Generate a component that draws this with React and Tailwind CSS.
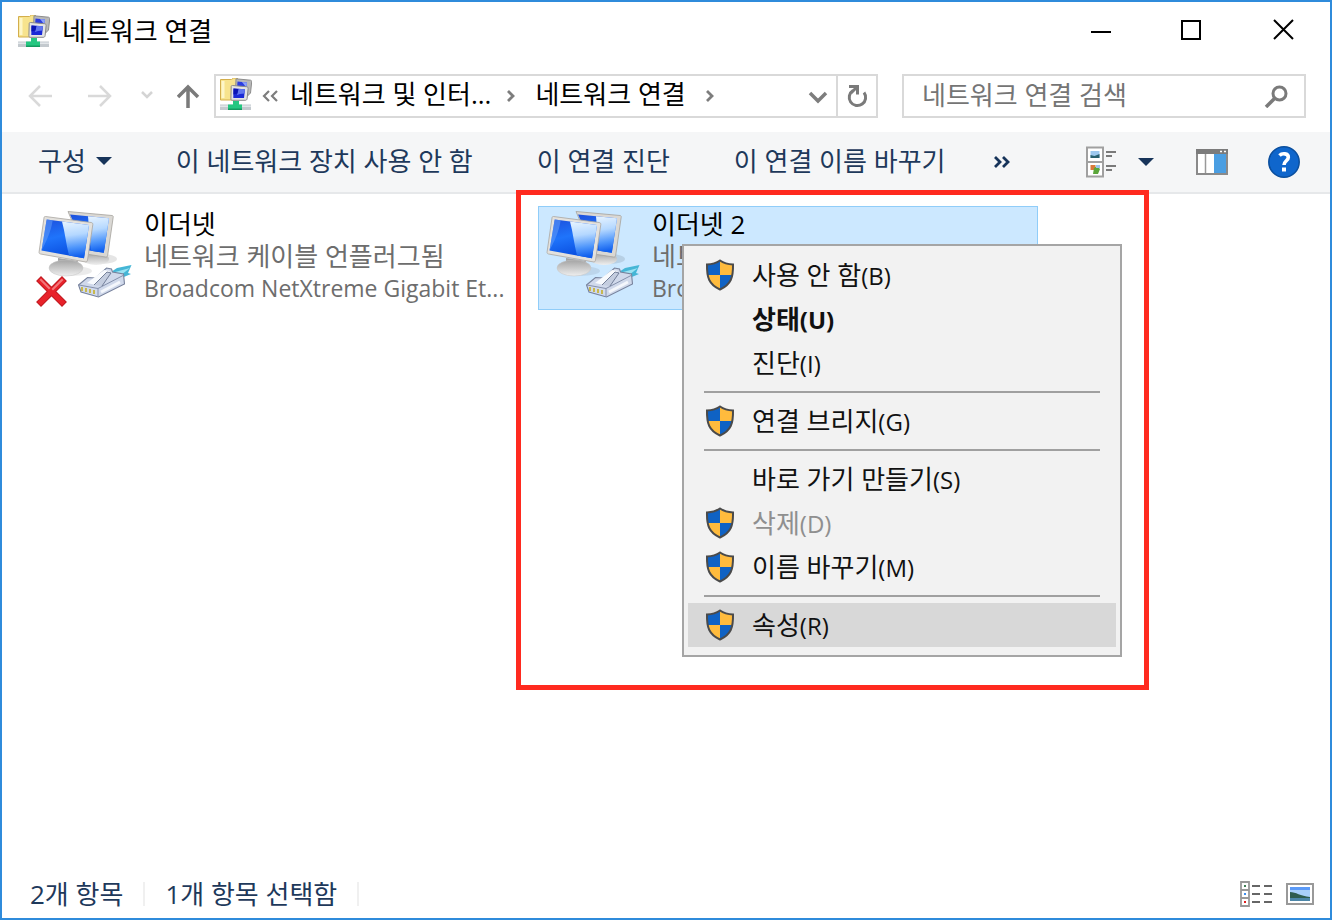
import { useState } from 'react';

const NetworkFolderIcon = () => (
  <svg className="h-8 w-8 shrink-0" viewBox="0 0 32 32" aria-hidden="true">
    <path d="M.5 1.500h11l2-1.500h4v21l-4 1H.5z" fill="#f7e38d" stroke="#d3ae4c" />
    <path d="M3 3v17" stroke="#fdf6c9" strokeWidth="3" />
    <path d="M16 .8l14.500 1.400c1 .2 1.300.8 1.200 1.800l-1.200 11-3 3-12-3z" fill="#b9b9b9" stroke="#8c8c8c" />
    <path d="M17.500 3.500l9.500 1-1 7-9-1z" fill="#2a3ce0" />
    <path d="M22 4l5 .5-.6 5z" fill="#8da2fb" />
    <path d="M12.500 7.500l14 1.200c1.300.2 1.700.8 1.600 2l-1 10c-.2 1.200-.8 1.600-2 1.600H12.500c-1.200 0-1.700-.5-1.600-1.700l.3-11.800c0-1 .4-1.400 1.300-1.300z" fill="#e4e4e4" stroke="#8a8a8a" />
    <path d="M13.500 10.500l11.500.8-1 8.700H13.300z" fill="#1a2ad6" />
    <path d="M18 10.800l7 .5-.5 4.200-4.500.5-3 1z" fill="#6076ee" />
    <path d="M13.500 10.500l5 .4-1 4.600-4.100 1z" fill="#0a14b4" />
    <rect y="26.500" width="31" height="5.500" fill="#c3c9ce" />
    <rect y="27.500" width="31" height="1.500" fill="#e2e6e9" />
    <path d="M13 23h6v3.500h3V32H8v-5.500h5z" fill="#25c781" />
    <path d="M8 30.500h14V32H8z" fill="#159a60" />
  </svg>
);

const ConnectionIcon = ({ id, unplugged }) => (
  <svg className="h-[100px] w-24 shrink-0" viewBox="0 0 96 100" aria-hidden="true">
    <defs>
      <linearGradient id={`${id}-screen`} x1="0" y1="0" x2="0.300" y2="1">
        <stop offset="0" stopColor="#1d50dc" />
        <stop offset="0.500" stopColor="#1f74fb" />
        <stop offset="1" stopColor="#0a4fe0" />
      </linearGradient>
      <linearGradient id={`${id}-shine`} x1="0" y1="0" x2="0.100" y2="1">
        <stop offset="0" stopColor="#e8f4ff" />
        <stop offset="0.400" stopColor="#b5d8ff" />
        <stop offset="0.750" stopColor="#4c94fb" />
        <stop offset="1" stopColor="#1160ee" />
      </linearGradient>
      <linearGradient id={`${id}-stand`} x1="0" y1="0" x2="0" y2="1">
        <stop offset="0" stopColor="#a4a4a4" />
        <stop offset="1" stopColor="#efefef" />
      </linearGradient>
    </defs>
    <ellipse cx="66" cy="51" rx="15" ry="5" fill="#000" opacity="0.100" />
    <ellipse cx="60" cy="51" rx="13" ry="6" fill={`url(#${id}-stand)`} />
    <path d="M32 3.500l44 4c1 .2 1.400.7 1.200 1.700l-5.500 38c-.2 1.400-.9 2-2.200 1.800L50 46z" fill="#dad8d4" stroke="#a5a29d" strokeWidth="0.800" />
    <path d="M34 6.500l39 3.700-5.200 34.500L50 42z" fill={`url(#${id}-screen)`} />
    <path d="M52 8.200l21 2-5.200 34.500-13-1.900z" fill={`url(#${id}-shine)`} />
    <ellipse cx="36" cy="63" rx="20" ry="5" fill="#000" opacity="0.080" />
    <path d="M22 50l20 3-3 8H22z" fill="#a3a3a3" />
    <ellipse cx="30" cy="60" rx="17" ry="8" fill={`url(#${id}-stand)`} stroke="#c4c4c4" strokeWidth="0.500" />
    <path d="M9.500 8.500l45.500 6c1.400.2 2 .9 1.800 2.200l-5.300 35.500c-.3 1.400-1 2-2.300 1.700L4.500 46c-1.200-.3-1.600-1-1.400-2.200L8 9.800c.2-1 .6-1.400 1.500-1.300z" fill="#e3e1dd" stroke="#a9a6a1" strokeWidth="0.800" />
    <path d="M10.700 11.500L53 17l-5 33.300-42.500-7.800z" fill={`url(#${id}-screen)`} />
    <path d="M26 13.500L53 17l-5 33.300-15-2.700c-3-12-4-23-7-34.100z" fill={`url(#${id}-shine)`} />
    <path d="M10.700 11.500l6 .8C15 24 10 34 5.500 42.500z" fill="#5b98f8" opacity="0.600" />
    <path d="M75 64l6-4 14.500-3-3.500 8 3 1-12 5z" fill="#45b6d6" />
    <path d="M79 64l15-4-9 7z" fill="#9be2f2" />
    <path d="M42.500 77l9-7.500 8 .5 11-10 5 1 1 3 11 2 1 10-26 13-17.500-5z" fill="#d0d9eb" stroke="#77829c" strokeWidth="1.100" />
    <path d="M43 77l19 3.500L88 67M62 80.500V89" fill="none" stroke="#8591ac" />
    <path d="M51 75l17-13 6 1-14 14z" fill="#f8fafd" />
    <path d="M58 77l13-13 4 1-9 13" fill="#c4cddf" stroke="#68748f" strokeWidth="0.900" />
    <path d="M65 84l19-10" stroke="#f4f7fc" strokeWidth="3" />
    <path d="M46 79v4M50 80v4M54 81v4M58 82v4" stroke="#c8b84e" strokeWidth="2" />
    {unplugged && (
      <g strokeLinecap="square">
        <path d="M5 73l21 21M26 73L5 94" stroke="#c11b22" strokeWidth="7" />
        <path d="M5 73l21 21M26 73L5 94" stroke="#e8222a" strokeWidth="5" />
        <path d="M5 72l8 8M26 72l-9 9" stroke="#f3777a" strokeWidth="2" />
      </g>
    )}
  </svg>
);

const ShieldIcon = () => (
  <svg className="h-8 w-8 shrink-0" viewBox="-1 0 32 32" aria-hidden="true">
    <path d="M15 2v14H2.500C2 13 2 9 2 5.500 7 5.500 11 4.500 15 2z" fill="#0f62c4" />
    <path d="M15 2v14h12.500c.5-3 .5-7 .5-10.500C23 5.500 19 4.500 15 2z" fill="#ffbb3d" />
    <path d="M15 30V16H2.500C4 22.500 8.500 27.500 15 30z" fill="#ffbb3d" />
    <path d="M15 30V16h12.500C26 22.500 21.500 27.500 15 30z" fill="#0f62c4" />
    <path d="M15 1.500c4 2.700 8 3.700 13 4 .3 13-2 20-13 25C4 25.500 1.700 18.500 2 5.500c5-.3 9-1.300 13-4z" fill="none" stroke="#4a4a4a" strokeWidth="2" />
  </svg>
);

const Arrow = ({ d, className }) => (
  <svg className={className} viewBox="0 0 24 24" fill="none" stroke="currentColor" aria-hidden="true">
    <path d={d} />
  </svg>
);

const Caret = () => (
  <svg className="h-2 w-4" viewBox="0 0 16 8" aria-hidden="true">
    <path d="M0 0h16L8 8z" fill="#17345a" />
  </svg>
);

const Crumb = () => (
  <svg className="h-3 w-2 shrink-0" viewBox="0 0 8 12" fill="none" stroke="#7d7d7d" strokeWidth="2.800" aria-hidden="true">
    <path d="M1 1l5 5-5 5" />
  </svg>
);

const ViewIcon = () => (
  <svg className="h-8 w-8" viewBox="0 0 32 32" aria-hidden="true">
    <path d="M1 1.500h16v29H1zM1 16h16" fill="#fff" stroke="#a0a0a0" strokeWidth="2" />
    <path d="M4.500 5h9v7h-9z" fill="#9cc8ef" />
    <path d="M4.500 9l4 1 5-2v4h-9z" fill="#28606e" />
    <path d="M4.500 19h5v5h-5z" fill="#d97a3c" />
    <path d="M8 22l3-2 3 3-2 5H7z" fill="#5aa63a" />
    <path d="M10 19h4v3h-4z" fill="#9cc4ec" />
    <path d="M20 6h10M20 10h6M20 20h10M20 24h6" stroke="#7a7a7a" strokeWidth="2" />
  </svg>
);

const PaneIcon = () => (
  <svg className="h-[26px] w-8" viewBox="0 0 32 26" aria-hidden="true">
    <path d="M1 1h30v24H1z" fill="#fff" stroke="#8a8a8a" strokeWidth="2" />
    <path d="M0 0h32v5H0z" fill="#7b7b7b" />
    <path d="M24 2.500h2M28 2.500h2" stroke="#fff" strokeWidth="1.500" />
    <path d="M9.500 5v19" stroke="#999" strokeWidth="1.500" />
    <path d="M18 5h12v19H18z" fill="#4a9ee2" />
  </svg>
);

const HelpIcon = () => (
  <svg className="h-8 w-8" viewBox="0 0 32 32" aria-hidden="true">
    <circle cx="16" cy="16" r="15.200" fill="#0f66cc" stroke="#0b4f9e" strokeWidth="1.500" />
    <path d="M11.500 9.500c2.500-2.500 9-2.500 8.800 2 0 3.200-4.300 3.500-4.300 7.500" fill="none" stroke="#fff" strokeWidth="3.600" />
    <path d="M14 21.500h4v4h-4z" fill="#fff" />
  </svg>
);

const DetailsIcon = () => (
  <svg className="h-[26px] w-8" viewBox="0 0 32 26" aria-hidden="true">
    <path d="M1 1h8v24H1zM1 9h8M1 17h8" fill="#fff" stroke="#999" strokeWidth="1.800" />
    <path d="M4 4h2v2H4z" fill="#3f7f55" />
    <path d="M4 12h2v2H4z" fill="#3c8ef0" />
    <path d="M4 20h2v2H4z" fill="#e02020" />
    <path d="M12 5h8M24 5h8M12 13h8M24 13h8M12 21h8M24 21h8" stroke="#666" strokeWidth="2" />
  </svg>
);

const PictureIcon = () => (
  <svg className="h-[22px] w-7" viewBox="0 0 28 22" aria-hidden="true">
    <path d="M1 1h26v20H1z" fill="#fff" stroke="#999" strokeWidth="2" />
    <path d="M4 4h20v14H4z" fill="#a9d0fb" />
    <path d="M4 4h20v3H4z" fill="#5b9af7" />
    <path d="M4 9c6 0 10 4 20 5v1H4z" fill="#2f5d4f" />
    <path d="M4 15h20v3H4z" fill="#4c86a8" />
  </svg>
);

const menu = [
  { label: '사용 안 함', hotkey: '(B)', shield: true },
  { label: '상태', hotkey: '(U)', bold: true },
  { label: '진단', hotkey: '(I)' },
  null,
  { label: '연결 브리지', hotkey: '(G)', shield: true },
  null,
  { label: '바로 가기 만들기', hotkey: '(S)' },
  { label: '삭제', hotkey: '(D)', shield: true, disabled: true },
  { label: '이름 바꾸기', hotkey: '(M)', shield: true },
  null,
  { label: '속성', hotkey: '(R)', shield: true, active: true },
];

const ContextMenu = () => (
  <div role="menu" className="absolute left-[680px] top-[50px] w-[440px] border-2 border-[#a5a5a5] bg-[#f2f2f2] px-1 pb-2 pt-[7px]">
    {menu.map((item, i) =>
      item ? (
        <button
          key={item.label}
          type="button"
          role="menuitem"
          disabled={item.disabled}
          className={`flex h-11 w-full items-center gap-4 pl-4 text-left ${item.active ? 'bg-[#d8d8d8]' : ''} ${item.bold ? 'font-bold' : ''} ${item.disabled ? 'text-[#8f8f8f]' : 'text-[#111]'}`}
        >
          <span className="w-8 shrink-0">{item.shield && <ShieldIcon />}</span>
          <span>
            {item.label}
            <span className="text-2xl leading-8">{item.hotkey}</span>
          </span>
        </button>
      ) : (
        <div key={i} role="separator" className="mx-4 flex h-[14px] items-center">
          <div className="h-[2px] w-full bg-[#a0a0a0]" />
        </div>
      )
    )}
  </div>
);

const Connection = ({ id, name, status, device, unplugged, selected }) => (
  <div
    className={`flex w-[500px] items-start gap-3 border py-px pl-[5px] leading-8 ${selected ? 'border-[#90cdf9] bg-[#cce8ff]' : 'border-transparent'}`}
  >
    <ConnectionIcon id={id} unplugged={unplugged} />
    <div className="whitespace-nowrap text-[#6d6d6d]">
      <p className="text-black">{name}</p>
      <p>{status}</p>
      <p className="text-[23px] leading-8">{device}</p>
    </div>
  </div>
);

const App = () => {
  const [query, setQuery] = useState('');

  return (
    <div className="flex min-h-screen flex-col border-2 border-[#2f8bdb] bg-white font-['Open_Sans','Noto_Sans_CJK_KR',sans-serif] text-[26px] leading-8 text-black">
      <header className="flex h-[58px] items-center pl-4">
        <NetworkFolderIcon />
        <h1 className="ml-3 flex-1">네트워크 연결</h1>
        <button type="button" aria-label="최소화" className="flex h-full w-[92px] items-center justify-center">
          <Arrow className="h-6 w-6 stroke-2" d="M3 13h20" />
        </button>
        <button type="button" aria-label="최대화" className="flex h-full w-[92px] items-center justify-center">
          <Arrow className="h-6 w-6 stroke-2" d="M2 2h18v18H2z" />
        </button>
        <button type="button" aria-label="닫기" className="flex h-full w-[92px] items-center justify-center">
          <Arrow className="h-6 w-6 stroke-2" d="M2 1l19 19M21 1L2 20" />
        </button>
      </header>

      <nav className="flex h-[72px] items-center pl-2 pr-6">
        <button type="button" aria-label="뒤로" className="flex w-[60px] justify-center text-[#d9d9d9]">
          <Arrow className="h-6 w-6 stroke-[2.500]" d="M12 2L2 12l10 10M2 12h22" />
        </button>
        <button type="button" aria-label="앞으로" className="flex w-[60px] justify-center text-[#d9d9d9]">
          <Arrow className="h-6 w-6 stroke-[2.500]" d="M12 2l10 10-10 10M22 12H0" />
        </button>
        <button type="button" aria-label="최근 위치" className="flex w-[34px] justify-center text-[#d4d4d4]">
          <Arrow className="h-6 w-6 stroke-[2.500]" d="M7 8l5 5 5-5" />
        </button>
        <button type="button" aria-label="위로" className="flex w-[50px] justify-center text-[#7a7a7a]">
          <Arrow className="h-6 w-6 stroke-[3.500]" d="M1 13L11 3l10 10M11 3v21" />
        </button>
        <div className="flex h-11 min-w-0 flex-1 items-center border-2 border-[#d9d9d9] pl-1">
          <div className="pb-1">
            <NetworkFolderIcon />
          </div>
          <svg className="ml-2 h-3 w-5 shrink-0" viewBox="0 0 20 12" fill="none" stroke="#7d7d7d" strokeWidth="2.200" aria-hidden="true">
            <path d="M9 1L4 6l5 5M17 1l-5 5 5 5" />
          </svg>
          <a href="#internet" className="ml-[10px] mr-4 whitespace-nowrap pb-1">네트워크 및 인터...</a>
          <Crumb />
          <a href="#connections" className="mx-5 whitespace-nowrap pb-1">네트워크 연결</a>
          <Crumb />
          <button type="button" aria-label="이전 위치" className="ml-auto flex h-full w-9 items-center justify-center text-[#7d7d7d]">
            <Arrow className="h-6 w-6 stroke-[3.500]" d="M4 9l8 8 8-8" />
          </button>
          <button type="button" aria-label="새로 고침" className="flex h-full w-10 items-center justify-center border-l-2 border-[#d9d9d9] text-[#7a7a7a]">
            <svg className="h-6 w-6" viewBox="0 0 24 24" fill="none" stroke="currentColor" strokeWidth="3" aria-hidden="true">
              <path d="M19 8.500a8.200 8.200 0 11-11-2M4 2.500h8.500v8M12.500 2.500L6 9" />
            </svg>
          </button>
        </div>
        <label className="ml-6 flex h-11 w-[404px] items-center border-2 border-[#d9d9d9] pl-[18px] pr-4">
          <input
            type="text"
            aria-label="네트워크 연결 검색"
            placeholder="네트워크 연결 검색"
            value={query}
            onChange={(e) => setQuery(e.target.value)}
            className="min-w-0 flex-1 pb-[2px] outline-none placeholder:text-[#757575]"
          />
          <svg className="h-6 w-6" viewBox="0 0 24 24" fill="none" stroke="#7a7a7a" aria-hidden="true">
            <circle cx="15.500" cy="9.500" r="6.500" strokeWidth="3" />
            <path d="M10.500 14.500L2 23" strokeWidth="3.500" />
          </svg>
        </label>
      </nav>

      <div className="flex h-[62px] items-center border-b-2 border-[#e6e8ea] bg-[#f5f6f7] pl-9 pr-[30px] text-[#1e395b]">
        <button type="button" className="flex items-center gap-[10px] pb-[2px]">
          구성
          <Caret />
        </button>
        <button type="button" className="ml-16 whitespace-nowrap pb-[2px]">이 네트워크 장치 사용 안 함</button>
        <button type="button" className="ml-16 whitespace-nowrap pb-[2px]">이 연결 진단</button>
        <button type="button" className="ml-16 whitespace-nowrap pb-[2px]">이 연결 이름 바꾸기</button>
        <button type="button" aria-label="추가 명령" className="ml-12">
          <svg className="h-3 w-[18px]" viewBox="0 0 18 12" fill="none" stroke="#17345a" strokeWidth="2.800" aria-hidden="true">
            <path d="M2 1l5 5-5 5M10 1l5 5-5 5" />
          </svg>
        </button>
        <button type="button" aria-label="보기 변경" className="ml-auto flex items-center gap-5">
          <ViewIcon />
          <Caret />
        </button>
        <button type="button" aria-label="미리 보기 창" className="ml-[42px]">
          <PaneIcon />
        </button>
        <button type="button" aria-label="도움말" className="ml-10">
          <HelpIcon />
        </button>
      </div>

      <main className="relative flex-1">
        <div className="flex gap-2 pl-7 pt-3">
          <Connection
            id="eth1"
            name="이더넷"
            status="네트워크 케이블 언플러그됨"
            device="Broadcom NetXtreme Gigabit Et..."
            unplugged
          />
          <Connection id="eth2" name="이더넷 2" status="네트워크" device="Broadcom" selected />
        </div>
        <ContextMenu />
        <div className="pointer-events-none absolute -top-1 left-[514px] h-[500px] w-[633px] border-[5px] border-[#ff2a1f]" />
      </main>

      <footer className="flex h-12 items-center pl-7 pr-4 text-[#1e395b]">
        <span>2개 항목</span>
        <span className="mx-5 h-6 w-[2px] bg-[#f0f0f0]" />
        <span>1개 항목 선택함</span>
        <span className="mx-5 h-6 w-[2px] bg-[#f0f0f0]" />
        <button type="button" aria-label="자세히" className="ml-auto">
          <DetailsIcon />
        </button>
        <button type="button" aria-label="큰 아이콘" className="ml-[14px]">
          <PictureIcon />
        </button>
      </footer>
    </div>
  );
};

export default App;
